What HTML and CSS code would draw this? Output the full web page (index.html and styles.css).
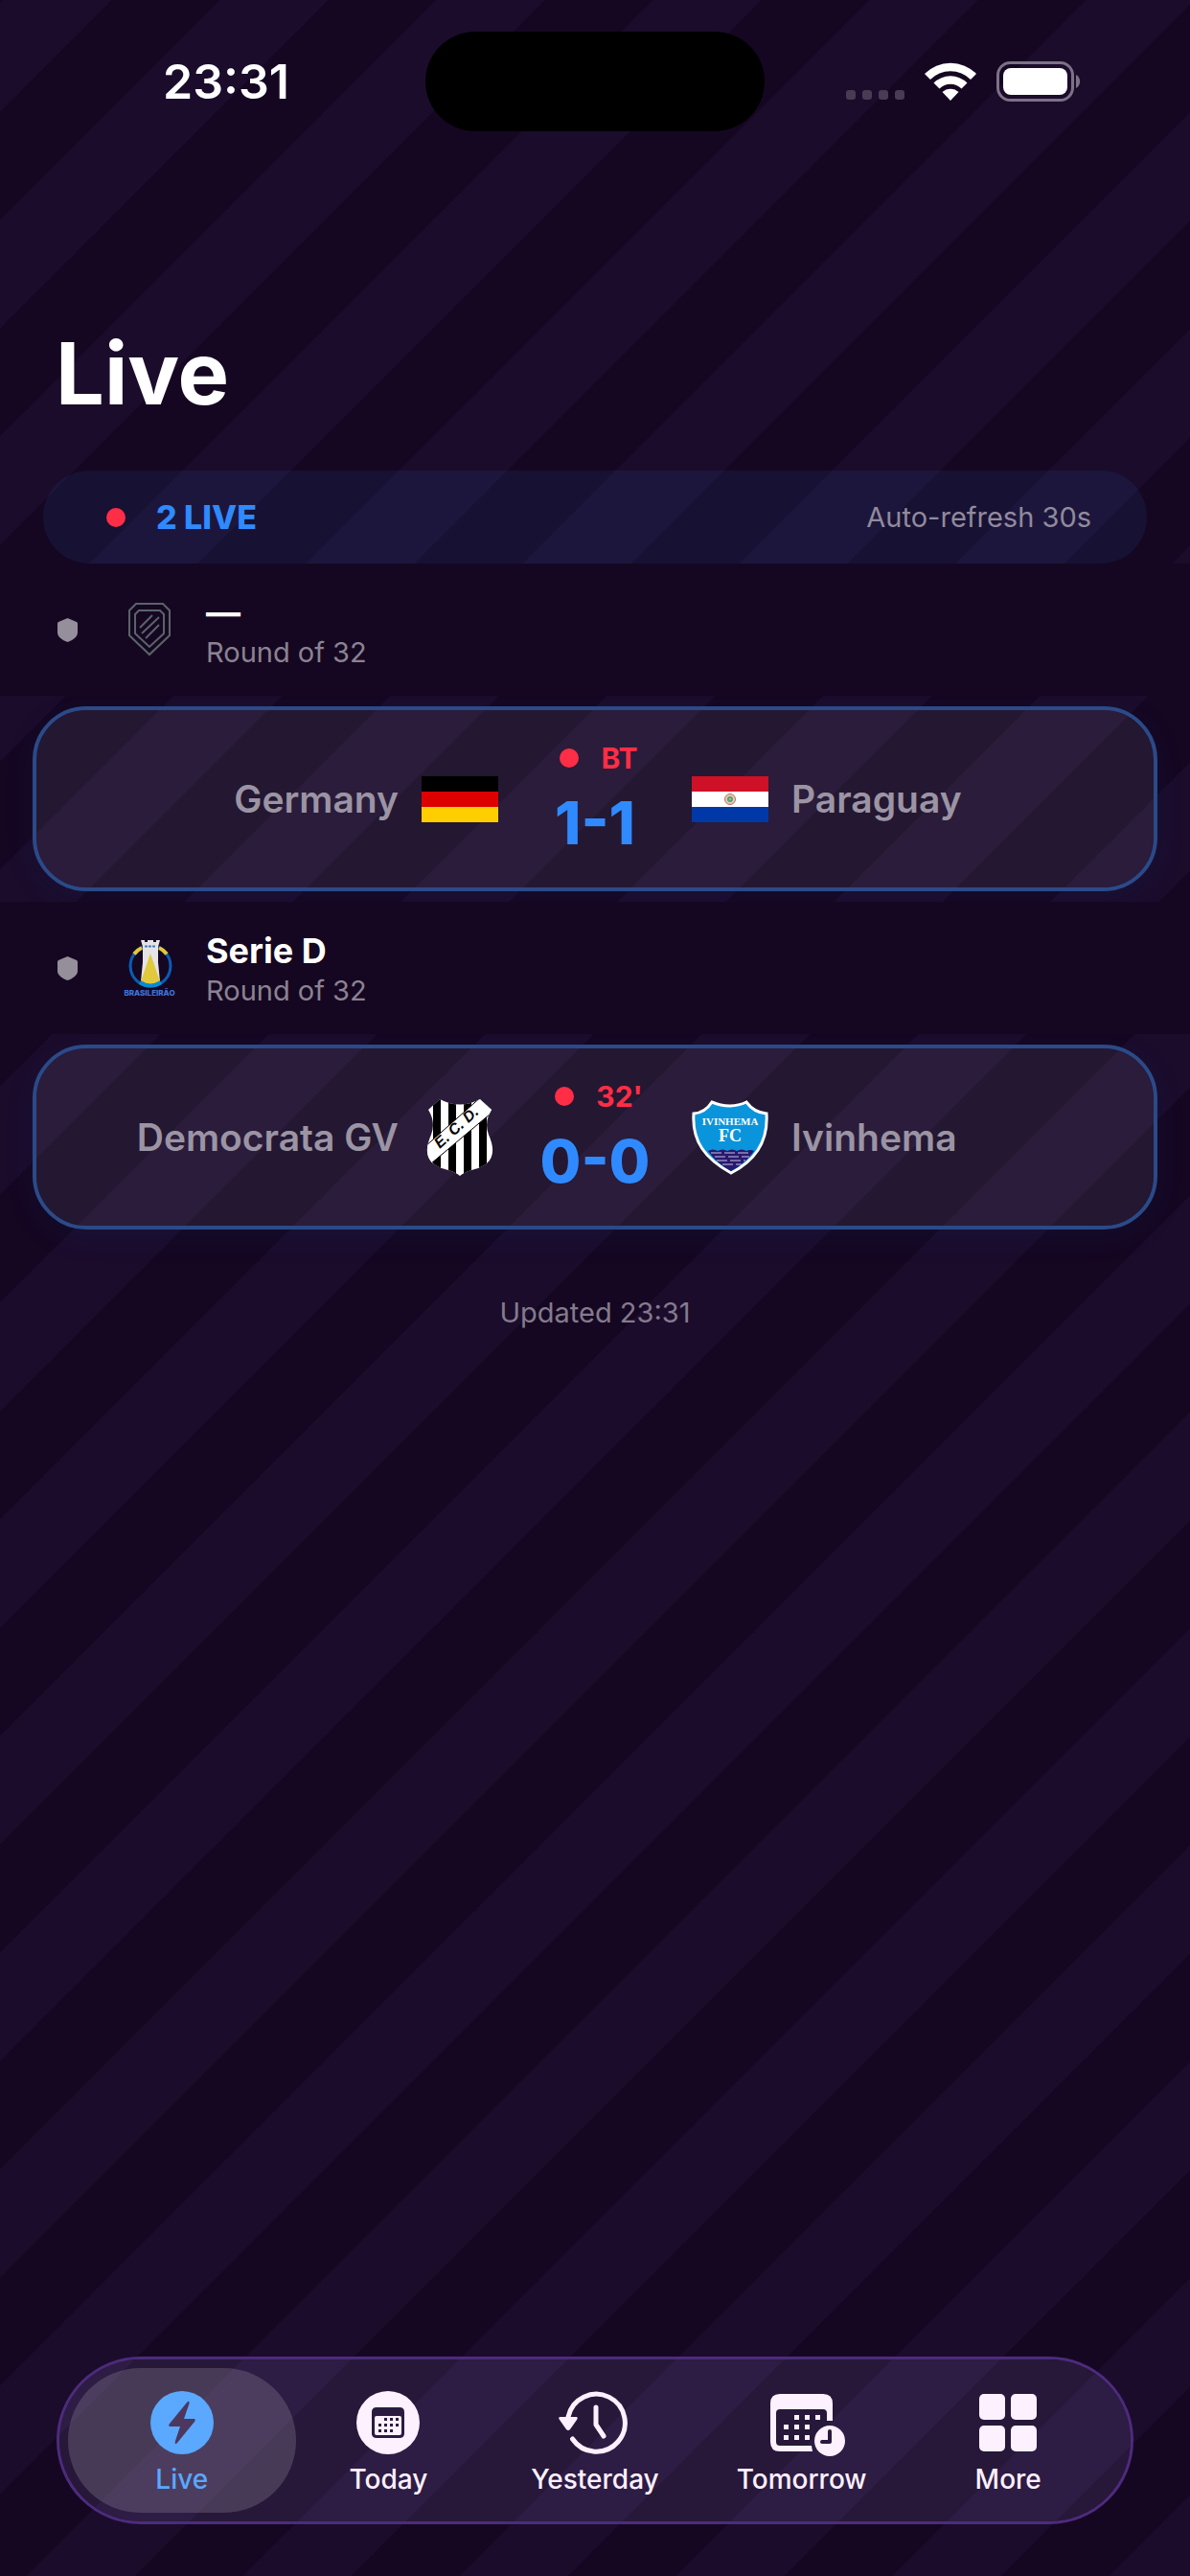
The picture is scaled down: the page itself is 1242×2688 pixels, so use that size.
FILE: index.html
```html
<!DOCTYPE html>
<html lang="en">
<head>
    <meta charset="UTF-8">
    <meta name="viewport" content="width=device-width, initial-scale=1.0">
    <title>Live</title>
    <link rel="stylesheet" href="styles.css">
</head>
<body>
    <div class="status-bar">
        <div class="status-time">23:31</div>
        <div class="island"></div>
        <div class="status-icons">
            <div class="signal"><i></i><i></i><i></i><i></i></div>
            <svg class="wifi" viewBox="0 0 54 40">
                <path d="M0 12 A38 38 0 0 1 54 12 L48 18 A29.500 29.500 0 0 0 6 18 Z"/>
                <path d="M9.500 21.500 A25 25 0 0 1 44.500 21.500 L38.500 27.500 A16.500 16.500 0 0 0 15.500 27.500 Z"/>
                <path d="M18.500 31 A12.500 12.500 0 0 1 35.500 31 L27 40 Z"/>
            </svg>
            <svg class="battery" viewBox="0 0 88 42">
                <rect x="1.500" y="1.500" width="78" height="39" rx="13" fill="none" stroke="#7c7286" stroke-width="3"/>
                <rect x="7" y="7" width="67" height="28" rx="8" fill="#fff"/>
                <path d="M83 14 a8 8 0 0 1 0 14 Z" fill="#7c7286"/>
            </svg>
        </div>
    </div>

    <main>
        <h1>Live</h1>

        <div class="live-banner">
            <span class="dot"></span>
            <span class="live-count">2 LIVE</span>
            <span class="refresh">Auto-refresh 30s</span>
        </div>

        <section>
            <div class="league">
                <svg class="league-shield" viewBox="0 0 21 25"><path d="M10.500 0 L20 4 Q21 4.500 21 6 V15 C21 20 15 23.500 10.500 25 C6 23.500 0 20 0 15 V6 Q0 4.500 1 4 Z"/></svg>
                <svg class="league-logo" viewBox="0 0 60 60" fill="none" stroke="#5a6468" stroke-width="2">
                    <path d="M16 3 H44 L51 10 V36 L30 56 L9 36 V10 Z"/>
                    <path d="M19 10 H41 L45 14 V34 L30 48 L15 34 V14 Z"/>
                    <path d="M20 28 L33 15 M22 34 L40 17 M26 39 L40 25"/>
                </svg>
                <div class="league-text">
                    <h2>—</h2>
                    <p>Round of 32</p>
                </div>
            </div>
            <div class="match">
                <div class="team home">
                    <span>Germany</span>
                    <svg class="crest" viewBox="0 0 80 80">
                        <path d="M0 16 H80 V32 H0 Z" fill="#000"/>
                        <path d="M0 32 H80 V48 H0 Z" fill="#d00"/>
                        <path d="M0 48 H80 V64 H0 Z" fill="#ffce00"/>
                    </svg>
                </div>
                <div class="score">
                    <div class="minute"><span class="dot"></span>BT</div>
                    <div class="goals">1-1</div>
                </div>
                <div class="team">
                    <svg class="crest" viewBox="0 0 80 80">
                        <path d="M0 16 H80 V32 H0 Z" fill="#ce1126"/>
                        <path d="M0 32 H80 V48 H0 Z" fill="#fff"/>
                        <path d="M0 48 H80 V64 H0 Z" fill="#0038a8"/>
                        <circle cx="40" cy="40" r="5.500" fill="#d9d2b0" stroke="#c96a5c"/>
                        <circle cx="40" cy="40" r="3" fill="#5a9a8a"/>
                        <circle cx="40" cy="40" r="1" fill="#e8c040"/>
                    </svg>
                    <span>Paraguay</span>
                </div>
            </div>
        </section>

        <section>
            <div class="league">
                <svg class="league-shield" viewBox="0 0 21 25"><path d="M10.500 0 L20 4 Q21 4.500 21 6 V15 C21 20 15 23.500 10.500 25 C6 23.500 0 20 0 15 V6 Q0 4.500 1 4 Z"/></svg>
                <svg class="league-logo" viewBox="0 0 60 60">
                    <circle cx="31" cy="28" r="21" fill="none" stroke="#0a5cb4" stroke-width="3"/>
                    <path d="M14 15.500 A21 21 0 0 1 22 9 M40 9 A21 21 0 0 1 48 15.500" fill="none" stroke="#e0c93c" stroke-width="4"/>
                    <path d="M21 1 H25 V3 H28 V1 H34 V3 H37 V1 H41 L39 8 V24 L41 44 Q31 50 21 44 L23 24 V8 Z" fill="#e4e4e6"/>
                    <path d="M31 15 L41 44 Q31 50 21 44 Z" fill="#e0c93c"/>
                    <path d="M20 45 Q31 52 42 45" fill="none" stroke="#0a8ad0" stroke-width="4"/>
                    <path d="M25 7.500 H37" stroke="#4a78c4" stroke-width="2" stroke-dasharray="3 1"/>
                    <text x="30" y="59" class="logo-caption">BRASILEIRÃO</text>
                </svg>
                <div class="league-text">
                    <h2>Serie D</h2>
                    <p>Round of 32</p>
                </div>
            </div>
            <div class="match">
                <div class="team home">
                    <span>Democrata GV</span>
                    <svg class="crest" viewBox="0 0 80 80">
                        <clipPath id="ecd"><path d="M19 0 Q40 11 61 0 L73 11 Q65 24 70 37 Q82 64 59 72 Q46 75 40 80 Q34 75 21 72 Q-2 64 10 37 Q15 24 7 11 Z"/></clipPath>
                        <g clip-path="url(#ecd)">
                            <path d="M0 0 H80 V80 H0 Z" fill="#fff"/>
                            <path d="M12 0 h8 v80 h-8 Z M28 0 h8 v80 h-8 Z M44 0 h8 v80 h-8 Z M60 0 h8 v80 h-8 Z" fill="#000"/>
                            <path d="M-6 58 L64 -4 L78 10 L4 72 Z" fill="#fff" stroke="#000"/>
                            <text class="crest-initials" transform="translate(19 52) rotate(-42)">E. C. D.</text>
                        </g>
                    </svg>
                </div>
                <div class="score">
                    <div class="minute"><span class="dot"></span>32'</div>
                    <div class="goals">0-0</div>
                </div>
                <div class="team">
                    <svg class="crest" viewBox="0 0 80 80">
                        <path d="M21 3 Q40 11 57 3 Q65 14 78 15 C80 44 66 64 41 77 C14 62 0 44 2 15 Q14 14 21 3 Z" fill="#0a94dc" stroke="#fff" stroke-width="3"/>
                        <path d="M17 54 q5 -3 10 0 q5 -3 10 0 q5 -3 10 0 q5 -3 10 0 q4 -2 8 0 Q56 67 41 75 Q26 67 17 54 Z" fill="#28196e"/>
                        <path d="M20 56 H62 M24 60 H60 M26 64 H56 M32 68 H52" stroke="#c9c4e2" stroke-dasharray="11 3"/>
                        <text x="40" y="27" class="crest-name">IVINHEMA</text>
                        <text x="40" y="44" class="crest-fc">FC</text>
                    </svg>
                    <span>Ivinhema</span>
                </div>
            </div>
        </section>

        <p class="updated">Updated 23:31</p>
    </main>

    <nav class="tab-bar">
        <a href="#live" class="tab active">
            <svg viewBox="0 0 66 66">
                <circle cx="33" cy="33" r="33"/>
                <path d="M38 12 Q41 9 40.500 13 L35 29 H45 Q48 29 46 32 L28 54 Q25 57 26 52 L31 37 H21 Q18 37 20 34 Z" fill="#4c375f"/>
            </svg>
            <span>Live</span>
        </a>
        <a href="#today" class="tab">
            <svg viewBox="0 0 66 66">
                <circle cx="33" cy="33" r="33"/>
                <path d="M21 17 H45 Q50 17 50 22 V44 Q50 49 45 49 H21 Q16 49 16 44 V22 Q16 17 21 17 Z" fill="#2b1a40"/>
                <rect x="19" y="26" width="28" height="20" rx="2"/>
                <path d="M29 28h3v3h-3z M35 28h3v3h-3z M41 28h3v3h-3z M23 34h3v3h-3z M29 34h3v3h-3z M35 34h3v3h-3z M41 34h3v3h-3z M23 40h3v3h-3z M29 40h3v3h-3z M35 40h3v3h-3z" fill="#2b1a40"/>
            </svg>
            <span>Today</span>
        </a>
        <a href="#yesterday" class="tab">
            <svg class="wide" viewBox="-10 0 84 66">
                <g fill="none" stroke="#fdf0ff" stroke-width="5" stroke-linecap="round" stroke-linejoin="round">
                    <path d="M4 27 A30 30 0 1 1 8.500 50"/>
                    <path d="M33 17 V35 L41 47"/>
                </g>
                <path d="M-4 27 H12 Q15 27 13 30 L6 40 Q4 42 2 40 L-5 30 Q-7 27 -4 27 Z"/>
            </svg>
            <span>Yesterday</span>
        </a>
        <a href="#tomorrow" class="tab">
            <svg class="wide" viewBox="-9 -1 84 66">
                <path d="M10 2 H55 Q65 2 65 12 V30 H59 V22 Q59 18 55 18 H10 Q6 18 6 22 V52 Q6 56 10 56 H43 L44 62 H10 Q0 62 0 52 V12 Q0 2 10 2 Z"/>
                <path d="M25 24h5v5h-5z M36 24h5v5h-5z M47 24h5v5h-5z M14 34h5v5h-5z M25 34h5v5h-5z M36 34h5v5h-5z M14 45h5v5h-5z M25 45h5v5h-5z M36 45h5v5h-5z"/>
                <circle cx="62" cy="51" r="16"/>
                <path d="M62 41 V52 H54" fill="none" stroke="#2b1a40" stroke-width="4" stroke-linecap="round" stroke-linejoin="round"/>
            </svg>
            <span>Tomorrow</span>
        </a>
        <a href="#more" class="tab">
            <svg viewBox="0 0 66 66">
                <rect x="3" y="3" width="27" height="27" rx="5"/>
                <rect x="36" y="3" width="27" height="27" rx="5"/>
                <rect x="3" y="36" width="27" height="27" rx="5"/>
                <rect x="36" y="36" width="27" height="27" rx="5"/>
            </svg>
            <span>More</span>
        </a>
    </nav>
</body>
</html>
```

FILE: styles.css
```css
* {
    box-sizing: border-box;
}
body {
    margin: 0;
    min-height: 100vh;
    display: flex;
    flex-direction: column;
    font-family: Inter, "Liberation Sans", sans-serif;
    font-size: 29px;
    line-height: 36px;
    color: #fff;
    background-color: #150722;
    background-image: linear-gradient(135deg, #1b0c2c 25%, #150722 25%, #150722 50%, #1b0c2c 50%, #1b0c2c 75%, #150722 75%);
    background-size: 226px 226px;
    background-position: 4px 0;
}
h1, h2, p {
    margin: 0;
}

/* status bar */
.status-bar {
    display: grid;
    grid-template-columns: 1fr 354px 1fr;
    align-items: center;
    padding-top: 33px;
}
.status-time {
    padding-left: 28px;
    text-align: center;
    font-size: 50px;
    font-weight: 600;
}
.island {
    height: 104px;
    border-radius: 52px;
    background: #000;
}
.status-icons {
    display: flex;
    justify-content: flex-end;
    align-items: center;
    gap: 21px;
    padding-right: 114px;
}
.signal {
    display: flex;
    align-self: flex-end;
    gap: 7px;
    padding-bottom: 2px;
}
.signal i {
    width: 10px;
    height: 10px;
    border-radius: 3px;
    background: #483b54;
}
.wifi {
    width: 54px;
    height: 40px;
    fill: #fff;
}
.battery {
    width: 88px;
    height: 42px;
}

main {
    flex: 1;
}
h1 {
    padding: 194px 58px 42px;
    font-size: 90px;
    line-height: 118px;
    font-weight: 700;
}

/* live banner */
.live-banner {
    display: flex;
    align-items: center;
    height: 97px;
    margin: 0 45px;
    padding: 0 58px;
    border-radius: 48px;
    background: rgba(48, 138, 255, 0.08);
}
.dot {
    width: 20px;
    height: 20px;
    margin: 0 8px;
    border-radius: 50%;
    background: #ff2d46;
}
.live-count {
    margin-left: 24px;
    font-size: 34px;
    font-weight: 800;
    color: #308aff;
}
.refresh {
    margin-left: auto;
    color: #918a9c;
}

/* league header */
.league {
    position: relative;
    z-index: 1;
    display: flex;
    align-items: center;
    height: 138px;
    padding: 0 60px;
    background: #150722;
}
.league-shield {
    width: 21px;
    height: 25px;
    fill: #958e9b;
}
.league-logo {
    width: 60px;
    height: 60px;
    margin: 0 29px 0 45px;
}
.logo-caption {
    font: 800 8px Inter, sans-serif;
    text-anchor: middle;
    fill: #3f74d8;
}
.league-text {
    padding-top: 3px;
}
.league-text h2 {
    font-size: 36px;
    line-height: 44px;
    font-weight: 700;
}
.league-text p {
    line-height: 40px;
    color: #8b8391;
}

/* match card */
.match {
    display: grid;
    grid-template-columns: 1fr 202px 1fr;
    align-items: center;
    height: 193px;
    margin: 11px 34px;
    border: 4px solid #2b4a88;
    border-radius: 56px;
    background: rgba(240, 245, 255, 0.07);
    background-clip: padding-box;
    box-shadow: 0 8px 30px rgba(0, 60, 120, 0.12);
}
.team {
    display: flex;
    align-items: center;
    gap: 24px;
    font-size: 39px;
    font-weight: 600;
    color: #9b94a4;
}
.home {
    justify-content: flex-end;
}
.crest {
    width: 80px;
    height: 80px;
}
.crest-initials {
    font: italic 700 16px "Liberation Sans", sans-serif;
}
.crest-name {
    font: 700 11px "Liberation Serif", serif;
    text-anchor: middle;
    fill: #fff;
}
.crest-fc {
    font: 700 18px "Liberation Serif", serif;
    text-anchor: middle;
    fill: #fff;
}
.score {
    padding-top: 6px;
}
.minute {
    display: flex;
    align-items: center;
    justify-content: center;
    gap: 15px;
    font-size: 30px;
    font-weight: 700;
    color: #ff2d46;
}
.goals {
    padding-top: 8px;
    text-align: center;
    font-size: 62px;
    line-height: 84px;
    font-weight: 800;
    color: #308aff;
}
.updated {
    padding-top: 58px;
    text-align: center;
    color: #847b8c;
}

/* tab bar */
.tab-bar {
    display: grid;
    grid-template-columns: repeat(5, 1fr);
    height: 175px;
    margin: 0 59px 54px;
    padding: 9px 20px;
    border: 3px solid #4d2b7c;
    border-radius: 88px;
    background: rgba(190, 165, 255, 0.11);
    background-clip: padding-box;
}
.tab {
    display: flex;
    flex-direction: column;
    align-items: center;
    justify-content: center;
    gap: 8px;
    margin: 0 -11px;
    padding-top: 6px;
    font-size: 28px;
    font-weight: 500;
    color: #fdf0ff;
    text-decoration: none;
}
.tab svg {
    width: 66px;
    height: 66px;
    fill: #fdf0ff;
    overflow: visible;
}
.tab svg.wide {
    width: 84px;
}
.tab.active {
    border-radius: 76px;
    background: rgba(255, 255, 255, 0.15);
    color: #5aa8ff;
}
.tab.active svg {
    fill: #5aa8ff;
}
```
